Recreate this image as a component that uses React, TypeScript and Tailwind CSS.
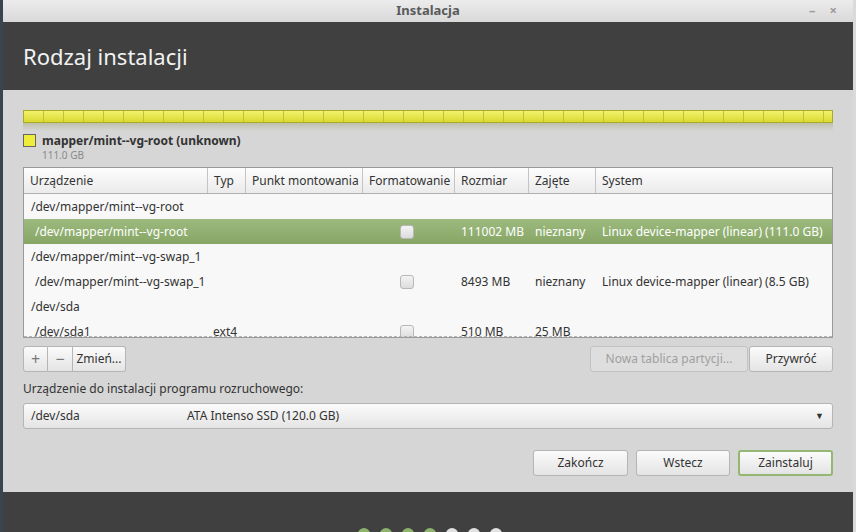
import React from 'react';

const font = { fontFamily: '"Noto Sans", "Open Sans", sans-serif' };

type Row = {
  device: string;
  child?: boolean;
  selected?: boolean;
  type?: string;
  size?: string;
  used?: string;
  system?: string;
};

const rows: Row[] = [
  { device: '/dev/mapper/mint--vg-root' },
  {
    device: '/dev/mapper/mint--vg-root',
    child: true,
    selected: true,
    size: '111002 MB',
    used: 'nieznany',
    system: 'Linux device-mapper (linear) (111.0 GB)',
  },
  { device: '/dev/mapper/mint--vg-swap_1' },
  {
    device: '/dev/mapper/mint--vg-swap_1',
    child: true,
    size: '8493 MB',
    used: 'nieznany',
    system: 'Linux device-mapper (linear) (8.5 GB)',
  },
  { device: '/dev/sda' },
  { device: '/dev/sda1', child: true, type: 'ext4', size: '510 MB', used: '25 MB' },
];

const cols = 'grid grid-cols-[184px_38px_117px_92px_74px_67px_1fr]';

// base look of a GTK button, border/text colours added per button
const btn =
  'h-[26px] rounded-[3px] border text-[12px] flex items-center justify-center whitespace-nowrap';
const normal = 'border-[#b5b5b5] bg-gradient-to-b from-[#fbfbfb] to-[#e4e4e4] text-[#333]';

function Checkbox() {
  return (
    <div className="w-[14px] h-[14px] rounded-[3px] border border-[#b8b8b8] bg-gradient-to-b from-[#f4f4f4] to-[#dcdcdc]" />
  );
}

export default function App() {
  return (
    <div className="w-[856px] h-[532px] flex overflow-hidden bg-[#d6d6d6]" style={font}>
      <div className="w-[3px] bg-[#3a4350]" />
      <div className="w-[850px] flex flex-col">
        {/* Title bar */}
        <div className="h-[22px] relative flex items-center justify-center bg-gradient-to-b from-[#ececec] to-[#d9d9d9]">
          <span className="text-[13px] font-bold text-[#5a5a5a]">Instalacja</span>
          <div className="absolute right-[16px] top-0 h-full flex items-center gap-[14px] text-[#9a9a9a] text-[13px] font-bold">
            <span>–</span>
            <span>×</span>
          </div>
        </div>

        {/* Header */}
        <div className="h-[68px] bg-[#404040] flex items-center px-[20px]">
          <h1 className="text-[22px] text-[#f2f2f2] font-normal">Rodzaj instalacji</h1>
        </div>

        {/* Body */}
        <div className="flex-1 bg-[#d6d6d6] px-[20px] pt-[20px] flex flex-col">
          {/* Partition bar */}
          <div className="relative">
            <div className="h-[13px] border border-[#a9a92a] bg-gradient-to-b from-[#f3f36a] to-[#dada2e] flex overflow-hidden">
              {Array.from({ length: 41 }).map((_, i) => (
                <div key={i} className="w-[20px] h-full border-r border-[#c3c33a] shrink-0" />
              ))}
            </div>
            <div className="h-[8px] bg-gradient-to-b from-[#b5b598] to-transparent opacity-70" />
          </div>

          {/* Legend */}
          <div className="flex gap-[6px] mt-[2px]">
            <div className="w-[13px] h-[13px] mt-[1px] border border-[#666] bg-[#eded3a]" />
            <div className="flex flex-col">
              <span className="text-[12px] font-bold text-[#333] leading-[15px]">
                mapper/mint--vg-root (unknown)
              </span>
              <span className="text-[10px] text-[#8a8a8a] leading-[15px]">111.0 GB</span>
            </div>
          </div>

          {/* Table */}
          <div className="mt-[4px] h-[171px] border border-[#9a9a9a] bg-[#f8f8f8] flex flex-col overflow-hidden relative">
            <div className={`${cols} h-[26px] shrink-0 bg-gradient-to-b from-[#fdfdfd] to-[#ebebeb] border-b border-[#b0b0b0] text-[12px] text-[#333]`}>
              {['Urządzenie', 'Typ', 'Punkt montowania', 'Formatowanie', 'Rozmiar', 'Zajęte', 'System'].map(
                (h, i) => (
                  <div
                    key={h}
                    className={`flex items-center px-[6px] whitespace-nowrap overflow-hidden ${
                      i < 6 ? 'border-r border-[#c4c4c4]' : ''
                    }`}
                  >
                    {h}
                  </div>
                )
              )}
            </div>
            <div className="flex flex-col">
              {rows.map((r, i) => (
                <div
                  key={i}
                  className={`${cols} h-[25px] shrink-0 text-[12px] whitespace-nowrap ${
                    r.selected
                      ? 'bg-gradient-to-b from-[#9cba7e] to-[#87a665] text-white'
                      : 'text-[#333]'
                  }`}
                >
                  <div className={`flex items-center ${r.child ? 'pl-[11px]' : 'pl-[7px]'}`}>{r.device}</div>
                  <div className="flex items-center pl-[5px]">{r.type}</div>
                  <div />
                  <div className="flex items-center pl-[37px]">{r.child && <Checkbox />}</div>
                  <div className="flex items-center pl-[6px]">{r.size}</div>
                  <div className="flex items-center pl-[6px]">{r.used}</div>
                  <div className="flex items-center pl-[6px]">{r.system}</div>
                </div>
              ))}
            </div>
            <div className="absolute left-0 right-0 bottom-0 h-0 border-b border-dashed border-[#b5b5b5]" />
          </div>

          {/* Table buttons */}
          <div className="mt-[8px] flex items-center justify-between">
            <div className="flex">
              <div className={`${btn} ${normal} w-[25px] rounded-r-none text-[16px] text-[#777]`}>+</div>
              <div className={`${btn} ${normal} w-[25px] rounded-none border-l-0 text-[16px] text-[#777]`}>−</div>
              <div className={`${btn} ${normal} w-[53px] rounded-l-none border-l-0`}>Zmień...</div>
            </div>
            <div className="flex gap-[1px]">
              <div className={`${btn} w-[158px] text-[#a0a0a0] bg-[#dedede] border-[#c2c2c2]`}>
                Nowa tablica partycji...
              </div>
              <div className={`${btn} ${normal} w-[84px]`}>Przywróć</div>
            </div>
          </div>

          {/* Boot loader */}
          <div className="mt-[8px] text-[12px] text-[#333] leading-[17px]">
            Urządzenie do instalacji programu rozruchowego:
          </div>
          <div className={`${btn} ${normal} mt-[6px] justify-start px-[7px]`}>
            <span className="w-[156px]">/dev/sda</span>
            <span className="flex-1">ATA Intenso SSD (120.0 GB)</span>
            <span className="text-[9px] pr-[1px]">▼</span>
          </div>

          {/* Navigation */}
          <div className="mt-[21px] flex justify-end gap-[8px]">
            <div className={`${btn} ${normal} w-[95px]`}>Zakończ</div>
            <div className={`${btn} ${normal} w-[94px]`}>Wstecz</div>
            <div className={`${btn} w-[95px] border-[2px] border-[#94b873] bg-gradient-to-b from-[#fbfbfb] to-[#e4e4e4] text-[#333]`}>
              Zainstaluj
            </div>
          </div>
        </div>

        {/* Footer */}
        <div className="h-[40px] bg-[#404040] flex justify-center pt-[36px] pl-[4px]">
          <div className="flex gap-[10px]">
            {['g', 'g', 'g', 'g', 'w', 'w', 'w'].map((c, i) => (
              <div
                key={i}
                className={`w-[12px] h-[12px] rounded-full ${c === 'g' ? 'bg-[#8db46a]' : 'bg-[#e2e2e2]'}`}
              />
            ))}
          </div>
        </div>
      </div>
      <div className="w-[3px] bg-[#dadada]" />
    </div>
  );
}
